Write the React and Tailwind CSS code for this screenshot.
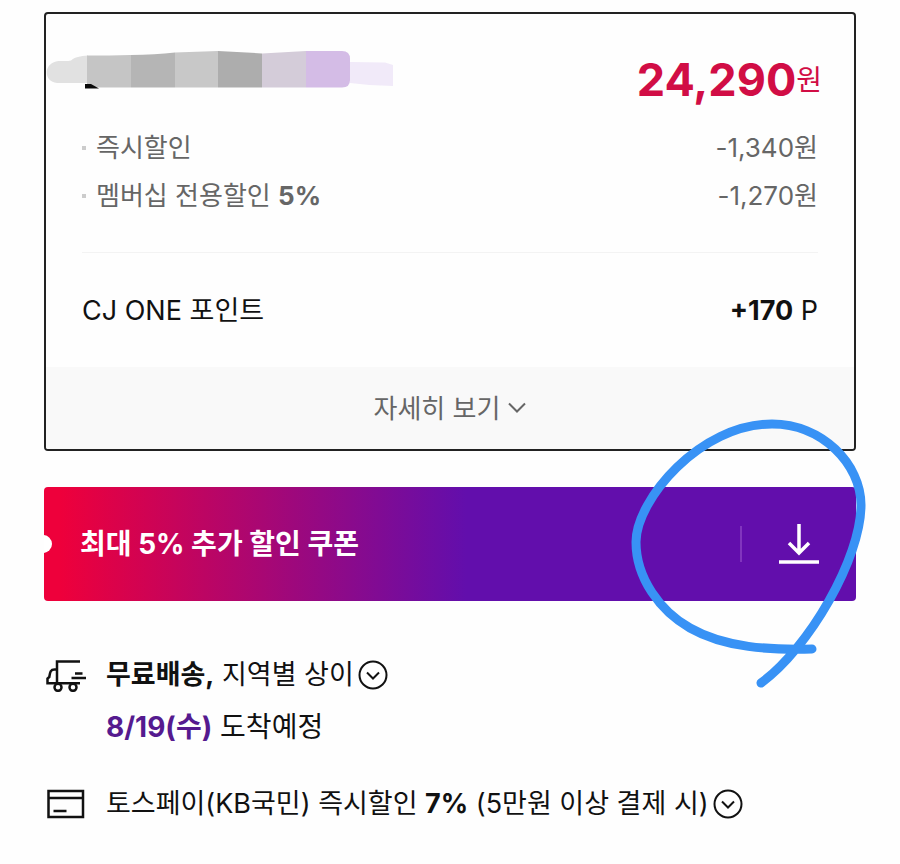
// Price summary, coupon banner and delivery info for the product page.

const DISCOUNTS = [
  { label: "즉시할인", amount: "-1,340원" },
  { label: "멤버십 전용할인", rate: "5%", amount: "-1,270원" },
];

// Brushed-over product title
function MaskedTitle() {
  return (
    <svg className="-ml-9 shrink-0" width="350" height="60" viewBox="46 50 350 60" aria-hidden="true">
      <path d="M88 55.500C80 56 75 57 71 60.500C65 62 61 60 56 61.500C43 64.500 44 82.500 57 83H88Z" fill="#e1e1e1" />
      <path d="M87 55.500Q110 55.500 131 55V87.500H91L87 84Z" fill="#c5c5c5" />
      <path d="M131 55Q155 54.500 175 52.500V87.500H131Z" fill="#b5b5b5" />
      <path d="M175 52.500L218 51V87.500H175Z" fill="#c8c8c8" />
      <path d="M218 51Q240 52 262 53.500V87.500H218Z" fill="#adadad" />
      <path d="M262 53.500L306 51V87.500H262Z" fill="#d4ccd9" />
      <path d="M350 62L385 62.500L393 65V86Q372 86 350 83Z" fill="#f1eaf9" />
      <path d="M306 51H342Q350 51 350 59V80Q350 87.500 342 87.500H306Z" fill="#d4bce6" />
      <path d="M85 84H91L99 88.500H85Z" fill="#0a0a0a" />
    </svg>
  );
}

function CircleChevron() {
  return (
    <svg width="30" height="30" viewBox="0 0 30 30" fill="none" stroke="#111" strokeWidth="2" aria-hidden="true">
      <circle cx="15" cy="15" r="13.500" />
      <path d="M9 12.500L15 18.500L21 12.500" />
    </svg>
  );
}

function TruckIcon() {
  return (
    <svg className="shrink-0" width="42" height="34" viewBox="44 658 42 34" fill="none" stroke="#111" strokeWidth="2.500" aria-hidden="true">
      <path d="M57 683V661.500H80" />
      <path d="M57 669.500H54.500C50 669.500 50 673 49.300 677L47.500 678.500V683.300H80" />
      <path d="M75 673.500H82.500M71.500 678H86" strokeWidth="2.300" />
      <circle cx="58" cy="687.300" r="3.500" fill="#fefefe" />
      <circle cx="73" cy="687.300" r="3.500" fill="#fefefe" />
    </svg>
  );
}

function CardIcon() {
  return (
    <svg className="shrink-0" width="42" height="34" viewBox="44 787 42 34" fill="none" stroke="#111" strokeWidth="2.500" aria-hidden="true">
      <rect x="48.500" y="791" width="34.500" height="26" />
      <path d="M48 798H83M53.500 811H66.500" />
    </svg>
  );
}

function PriceCard() {
  return (
    <section className="overflow-hidden rounded border-2 border-[#222]">
      <div className="px-9 pt-9 pb-8">
        <div className="flex items-center justify-between">
          <MaskedTitle />
          <p className="-mr-1 flex items-center whitespace-nowrap text-[#d10d45]">
            <strong className="text-[45px] leading-[60px] font-bold">24,290</strong>
            <span className="text-[28px] leading-[60px]">원</span>
          </p>
        </div>

        <ul className="mt-3.5 text-[26px] leading-[48px] text-[#666]">
          {DISCOUNTS.map((item) => (
            <li key={item.label} className="flex items-center">
              <span className="mr-2.5 size-1 bg-[#ccc]" />
              <span>
                {item.label} {item.rate && <b className="font-bold">{item.rate}</b>}
              </span>
              <span className="ml-auto">{item.amount}</span>
            </li>
          ))}
        </ul>

        <hr className="mt-8 border-[#f3f3f3]" />

        <div className="mt-[34px] flex items-center justify-between text-[27px] leading-[48px] text-[#111]">
          <span>CJ ONE 포인트</span>
          <span>
            <b className="font-bold">+170</b> P
          </span>
        </div>
      </div>

      <button type="button" className="flex h-[82px] w-full items-center justify-center gap-2 bg-[#f9f9f9] text-[26px] text-[#666]">
        자세히 보기
        <svg width="18" height="12" viewBox="0 0 18 12" fill="none" stroke="#666" strokeWidth="2" aria-hidden="true">
          <path d="M1 1.500L9 9.500L17 1.500" />
        </svg>
      </button>
    </section>
  );
}

function CouponBanner() {
  return (
    <div className="relative mt-9">
      <button
        type="button"
        className="relative flex h-[114px] w-full items-center overflow-hidden rounded bg-linear-to-r/srgb from-[#ee003b] from-2% via-[#620eac] via-52% to-[#620eac] pr-9 pl-9 text-white"
      >
        <span className="absolute -left-2.5 size-[18px] rounded-full bg-white" />
        <span className="text-[28px] font-bold">최대 5% 추가 할인 쿠폰</span>
        <span className="mr-9 ml-auto h-9 w-0.5 bg-[#8135be]" />
        <svg width="42" height="42" viewBox="0 0 42 42" fill="none" stroke="#fff" strokeWidth="3.500" aria-label="쿠폰 다운로드">
          <path d="M21 1V30M11 20L21 30L31 20" />
          <path d="M1 39H41" />
        </svg>
      </button>

      {/* hand-drawn marker around the download button */}
      <svg
        className="pointer-events-none absolute -top-[70px] -right-[13px]"
        width="240"
        height="275"
        viewBox="629 417 240 275"
        fill="none"
        stroke="#3892f5"
        strokeWidth="9"
        strokeLinecap="round"
        strokeLinejoin="round"
        aria-hidden="true"
      >
        <path d="M812 649C770 650 725 648 690 628C660 611 636 578 636 542C636 500 700 424 772 424C822 424 861 464 861 505C861 558 809 648 761 683" />
      </svg>
    </div>
  );
}

function DeliveryInfo() {
  return (
    <div className="mt-12 text-[27px] leading-[52px] text-[#111]">
      <div className="flex">
        <span className="flex h-[52px] items-center">
          <TruckIcon />
        </span>
        <div className="ml-5">
          <p className="flex items-center gap-1">
            <span>
              <b className="font-bold">무료배송,</b> 지역별 상이
            </span>
            <button type="button" aria-label="배송 안내 보기">
              <CircleChevron />
            </button>
          </p>
          <p className="text-[28px]">
            <b className="font-bold text-[#551a8f]">8/19(수)</b> 도착예정
          </p>
        </div>
      </div>

      <div className="mt-[25px] flex items-center">
        <CardIcon />
        <p className="ml-5 flex items-center gap-1">
          <span>
            토스페이(KB국민) 즉시할인 <b className="font-bold">7%</b> (5만원 이상 결제 시)
          </span>
          <button type="button" aria-label="결제 할인 보기">
            <CircleChevron />
          </button>
        </p>
      </div>
    </div>
  );
}

export default function App() {
  return (
    <main className="min-h-screen bg-[#fefefe] px-11 pt-3 pb-8 font-['Inter','Noto_Sans_CJK_KR',sans-serif]">
      <PriceCard />
      <CouponBanner />
      <DeliveryInfo />
    </main>
  );
}
